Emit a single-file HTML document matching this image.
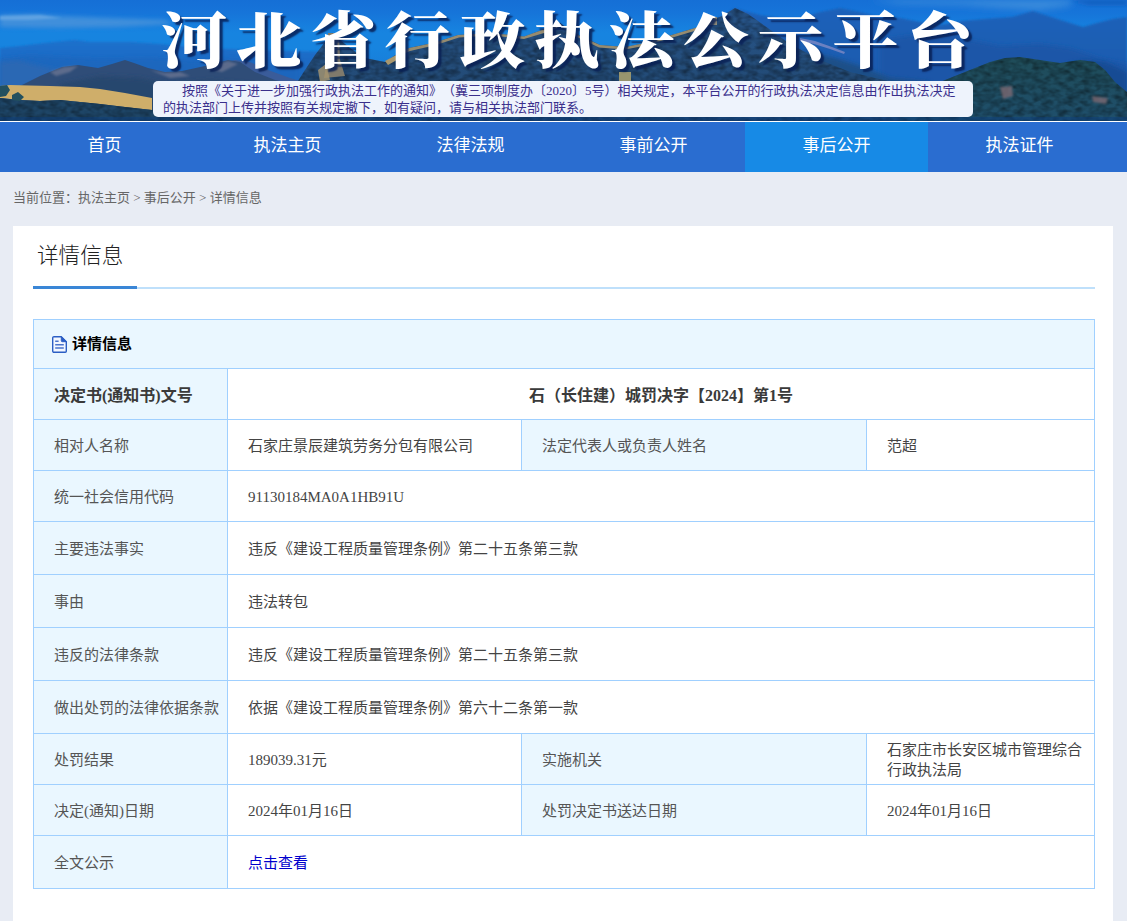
<!DOCTYPE html>
<html lang="zh-CN">
<head>
<meta charset="utf-8">
<title>河北省行政执法公示平台</title>
<style>
*{box-sizing:border-box;margin:0;padding:0;text-spacing-trim:space-all}
html,body{width:1127px;height:921px;overflow:hidden}
body{background:#e8ecf4;font-family:"Liberation Serif","Noto Sans CJK SC",sans-serif;font-size:15px;color:#555;position:relative}
a{text-decoration:none;color:inherit}
ul{list-style:none}
#banner{position:absolute;left:0;top:0;width:1127px;height:122px;background:#fff;overflow:hidden}
#banner svg{position:absolute;left:0;top:0;width:1127px;height:121px;display:block}
#title{position:absolute;left:161px;top:-8px;width:900px;height:90px;line-height:90px;font-family:"Noto Serif CJK SC","Noto Sans CJK SC",serif;font-weight:900;font-size:61px;color:#fff;white-space:nowrap;letter-spacing:8.2px;transform:scaleX(1.078);transform-origin:0 0;text-shadow:3px 3px 1.5px rgba(8,30,84,.85)}
#notice{position:absolute;left:153px;top:81px;width:820px;height:36px;background:#eef3fc;border-radius:5px;color:#3a2f8c;font-family:"Liberation Serif","Noto Sans CJK SC",sans-serif;font-size:13px;line-height:17px;padding:1px 10px 0 10px;text-indent:19px}
#nav{position:absolute;left:0;top:122px;width:1127px;height:50px;background:#2a6dd0}
#nav ul{position:absolute;left:13px;top:0;width:1100px;height:50px}
#nav li{float:left;width:183px;height:50px;line-height:47px;text-align:center;color:#fff;font-size:17px;font-family:"Liberation Sans","Noto Sans CJK SC",sans-serif}
#nav li.on{background:#178ae6}
#crumb{position:absolute;left:13px;top:188px;height:20px;line-height:20px;font-size:13px;color:#666;font-family:"Liberation Serif","Noto Sans CJK SC",sans-serif;white-space:nowrap}
#card{position:absolute;left:13px;top:226px;width:1100px;height:700px;background:#fff}
#card h2{position:absolute;left:24px;top:15px;font-weight:300;font-size:21.6px;line-height:30px;color:#222;font-family:"Liberation Sans","Noto Sans CJK SC",sans-serif}
#rule{position:absolute;left:20px;top:61px;width:1062px;height:2px;background:#bfe0fb}
#rule i{position:absolute;left:0;top:-1px;width:104px;height:3px;background:#3a86d6}
table{position:absolute;left:20px;top:93px;width:1061px;border-collapse:collapse;table-layout:fixed}
td,th{border:1px solid #a0d0ff;padding:1px 8px 0 20px;white-space:nowrap;text-align:left;vertical-align:middle;font-weight:normal;line-height:20px;height:51px}
th{background:#eaf7ff}
td{background:#fff;color:#444}
tr.cap th{height:49px;font-weight:bold;color:#000;font-size:15px;padding-left:18px;padding-top:0}
tr.h53 td,tr.h53 th{height:53px}
th.big{font-weight:bold;font-size:16px;color:#3a3a3a;padding-top:3px}
td.big{font-weight:bold;font-size:16px;color:#3a3a3a;text-align:center;padding:3px 20px 0 20px}
td a{color:#0000cc}
.ico{display:inline-block;vertical-align:-4px;margin-right:5px}
</style>
</head>
<body>
<div id="banner">
<svg viewBox="0 0 1127 121" preserveAspectRatio="none">
<defs>
<linearGradient id="sky" x1="0" y1="0" x2="0" y2="1">
<stop offset="0" stop-color="#156fd6"/><stop offset=".1" stop-color="#1674d9"/><stop offset=".27" stop-color="#1784e0"/><stop offset=".4" stop-color="#1784df"/><stop offset="1" stop-color="#1a6cc8"/>
</linearGradient>
<linearGradient id="far" x1="0" y1="0" x2="0" y2="1">
<stop offset="0" stop-color="#1a70cc"/><stop offset=".3" stop-color="#1c6ac4"/><stop offset="1" stop-color="#2666b4"/>
</linearGradient>
<linearGradient id="hill" x1="0" y1="0" x2="0" y2="1">
<stop offset="0" stop-color="#28568c"/><stop offset=".5" stop-color="#244d7a"/><stop offset="1" stop-color="#1f456e"/>
</linearGradient>
<linearGradient id="rfar" x1="0" y1="0" x2="0" y2="1">
<stop offset="0" stop-color="#1c62ba"/><stop offset=".5" stop-color="#1b5cb0"/><stop offset="1" stop-color="#1a56a6"/>
</linearGradient>
<linearGradient id="grn" x1="0" y1="0" x2="0" y2="1">
<stop offset="0" stop-color="#1f4c58"/><stop offset="1" stop-color="#1f4f6c"/>
</linearGradient>
<filter id="b1" x="-10%" y="-50%" width="120%" height="200%"><feGaussianBlur stdDeviation="1"/></filter>
<filter id="b2" x="-10%" y="-50%" width="120%" height="200%"><feGaussianBlur stdDeviation="2"/></filter>
<filter id="b3" x="-10%" y="-80%" width="120%" height="260%"><feGaussianBlur stdDeviation="3.5"/></filter>
<filter id="tex" x="0" y="0" width="100%" height="100%"><feTurbulence type="fractalNoise" baseFrequency=".12 .2" numOctaves="2" seed="7" result="n"/><feColorMatrix in="n" type="matrix" values="0 0 0 0 0  0 0 0 0 0  0 0 0 0 0  1.2 1.2 0 0 -.9"/><feComposite in2="SourceGraphic" operator="in"/></filter>
</defs>
<rect width="1127" height="121" fill="url(#sky)"/>
<!-- clouds -->
<path d="M0 15 L35 14 L60 16 L110 18 L165 20 L172 24 L120 27 L60 28 L0 27Z" fill="#3f8fdb" filter="url(#b2)"/>
<path d="M0 16 L40 15 L62 18 L30 20 L0 20Z" fill="#5ea2e2" filter="url(#b1)"/>
<path d="M870 0 L1075 0 L1068 6 L1040 10 L1000 8 L960 5 L900 4Z" fill="#3a8cdc" filter="url(#b3)"/>
<path d="M1070 0 L1127 0 L1127 5 L1090 5Z" fill="#155fbe" filter="url(#b2)"/>
<!-- far mountains left -->
<path d="M0 48 L20 46 L45 43 L65 41 L75 40 L90 42 L130 42 L160 44 L200 48 L250 50 L330 52 L330 121 L0 121Z" fill="url(#far)" filter="url(#b1)"/>
<path d="M0 59 L30 55 L60 57 L100 59 L150 58 L200 61 L260 58 L300 60 L300 121 L0 121Z" fill="#1e66bc" opacity=".7" filter="url(#b2)"/>
<path d="M0 62 L18 60 L40 66 L60 70 L20 88 L0 88Z" fill="#2a68b4" filter="url(#b2)"/>
<!-- mid mountains left -->
<path d="M235 60 L250 62 L268 70 L290 78 L310 84 L310 121 L200 121 L200 70Z" fill="#3a5c9a"/>
<path d="M18 87 L40 76 L62 67 L78 65 L98 68 L112 64 L125 60 L134 63 L148 68 L165 72 L182 71 L205 66 L228 60 L240 62 L255 72 L275 80 L300 86 L300 121 L18 121Z" fill="#2f4d78"/>
<path d="M60 84 L100 76 L140 78 L170 84 L210 80 L250 84 L290 90 L300 121 L60 121Z" fill="#28466e" filter="url(#b2)"/>
<path d="M50 72 L64 67 L78 66 L70 72 L56 76Z M150 70 L165 73 L180 72 L190 76 L170 78Z M205 68 L228 61 L238 64 L222 72Z" fill="#8a8aa0" opacity=".5" filter="url(#b1)"/>
<!-- right far mountains -->
<path d="M700 26 L722 16 L735 8 L745 11 L760 15 L780 18 L800 18 L820 12 L840 8 L860 12 L880 17 L900 18 L920 22 L940 25 L962 21 L985 19 L1012 17 L1033 11 L1051 17 L1070 23 L1083 27 L1097 23 L1113 19 L1127 17 L1127 121 L700 121Z" fill="url(#rfar)" filter="url(#b1)"/>
<path d="M880 40 L920 34 L960 38 L1000 46 L1040 44 L1070 48 L1100 58 L1127 64 L1127 121 L880 121Z" fill="#1a56a8" filter="url(#b2)"/>
<path d="M1060 66 L1085 60 L1105 62 L1127 72 L1127 100 L1090 84Z" fill="#174c94" filter="url(#b2)"/>
<path d="M780 50 L810 52 L835 58 L860 66 L890 78 L930 82 L930 121 L780 121Z" fill="#1c4f88" filter="url(#b2)"/>
<!-- central hills with great wall -->
<path d="M296 84 L305 70 L315 55 L325 42 L333 36 L340 40 L350 48 L365 58 L385 62 L400 52 L409 48 L435 42.5 L458 35 L492 33 L524 36.5 L542 30 L560 23 L577 34 L600 45 L625 47 L640 44 L670 35.5 L700 26.5 L712 20 L722 16 L735 8 L748 14 L765 26 L790 44 L820 60 L850 72 L900 84 L960 90 L960 121 L296 121Z" fill="url(#hill)"/>
<path d="M296 84 L305 70 L315 55 L325 42 L333 36 L340 40 L350 48 L365 58 L385 62 L400 52 L409 48 L435 42.5 L458 35 L492 33 L524 36.5 L542 30 L560 23 L577 34 L600 45 L625 47 L640 44 L670 35.5 L700 26.5 L712 20 L722 16 L735 8 L748 14 L765 26 L790 44 L820 60 L850 72 L900 84 L960 90 L960 121 L296 121Z" fill="#1a3f66" filter="url(#tex)" opacity=".45"/>
<path d="M400 52 L409 48 L435 42.5 L458 35 L492 33 L524 36.5 L542 30 L558 24 L562 26 L544 33 L524 39 L492 35.5 L459 37.5 L436 45 L410 51 L401 55Z" fill="#a39470" opacity=".9"/>
<path d="M578 35 L600 45 L625 47 L640 44 L670 35.5 L700 26.5 L711 20.5 L714 23 L701 29 L671 38 L641 46.5 L625 49.5 L599 47.5 L577 37Z" fill="#a39470" opacity=".9"/>
<path d="M706 17 L717 17 L717 25 L706 25Z" fill="#8f8a78"/>
<path d="M327 60 L328 33 L339 33 L340 60 L345 76 L324 78Z" fill="#7f7a6c"/>
<path d="M318 70 L326 64 L330 80 L320 82Z" fill="#a89670" opacity=".8"/>
<path d="M385 61 L400 53 L402 57 L388 65Z" fill="#a8976e"/>
<path d="M619 72 L631 72 L631 81 L619 81Z" fill="#98946e"/>
<path d="M800 38 L815 41 L832 47 L845 52 L844 54 L830 49 L814 44 L800 41Z" fill="#8d90c8" opacity=".7"/>
<!-- right green hill -->
<path d="M900 90 L940 82 L965 72 L990 62 L1005 58 L1020 57 L1040 60 L1060 63 L1080 60 L1095 62 L1105 70 L1115 82 L1127 92 L1127 121 L900 121Z" fill="url(#grn)"/>
<path d="M900 90 L940 82 L965 72 L990 62 L1005 58 L1020 57 L1040 60 L1060 63 L1080 60 L1095 62 L1105 70 L1115 82 L1127 92 L1127 121 L900 121Z" fill="#143a48" filter="url(#tex)" opacity=".45"/>
<path d="M1000 87 L1012 86 L1013 96 L1003 99Z M1092 96 L1108 98 L1106 104 L1093 102Z" fill="#8a6f78" opacity=".7" filter="url(#b1)"/>
<!-- sand band left -->
<path d="M0 86 L10 85 L50 86 L80 87 L100 89 L125 93 L152 98 L152 110 L125 107 L100 104 L80 102 L60 100 L40 101 L20 100 L0 98Z" fill="#cfae6a"/>
<path d="M0 98 L20 100 L40 101 L60 100 L80 102 L100 104 L125 107 L152 110 L300 112 L300 121 L0 121Z" fill="#1e4566"/>
<path d="M0 98 L20 100 L40 101 L60 100 L80 102 L100 104 L125 107 L152 110 L300 112 L300 121 L0 121Z" fill="#143550" filter="url(#tex)" opacity=".4"/>
<path d="M0 86 L7 85 L10 90 L6 96 L0 97Z M12 95 L18 92 L24 97 L20 101 L12 100Z" fill="#23505f"/>
<rect x="0" y="117" width="1127" height="4" fill="#0c3f80" opacity=".45"/>
</svg>
<h1 id="title">河北省行政执法公示平台</h1>
<p id="notice">按照《关于进一步加强行政执法工作的通知》（冀三项制度办〔2020〕5号）相关规定，本平台公开的行政执法决定信息由作出执法决定的执法部门上传并按照有关规定撤下，如有疑问，请与相关执法部门联系。</p>
</div>
<div id="nav"><ul>
<li><a>首页</a></li><li><a>执法主页</a></li><li><a>法律法规</a></li><li><a>事前公开</a></li><li class="on"><a>事后公开</a></li><li><a>执法证件</a></li>
</ul></div>
<div id="crumb">当前位置：执法主页 &gt; 事后公开 &gt; 详情信息</div>
<div id="card">
<h2>详情信息</h2>
<div id="rule"><i></i></div>
<table>
<colgroup><col style="width:194px"><col style="width:294px"><col style="width:345px"><col style="width:228px"></colgroup>
<tr class="cap"><th colspan="4"><svg class="ico" width="15" height="17" viewBox="0 0 15 17"><path d="M2 .7h7.3l5 5v9.6a1 1 0 0 1-1 1H2a1.3 1.3 0 0 1-1.3-1.3V2A1.3 1.3 0 0 1 2 .7z" fill="#f2f7ff" stroke="#2b5ec4" stroke-width="1.4" stroke-linejoin="round"/><path d="M9.3 .7v4a1 1 0 0 0 1 1h4z" fill="#2b5ec4" stroke="#2b5ec4" stroke-width="1" stroke-linejoin="round"/><path d="M3.2 5.3h3.4M3.2 8.7h8.6M3.2 12h8.6" stroke="#4a74cc" stroke-width="1.4" fill="none"/></svg>详情信息</th></tr>
<tr><th class="big">决定书(通知书)文号</th><td class="big" colspan="3">石（长住建）城罚决字【2024】第1号</td></tr>
<tr><th>相对人名称</th><td>石家庄景辰建筑劳务分包有限公司</td><th>法定代表人或负责人姓名</th><td>范超</td></tr>
<tr><th>统一社会信用代码</th><td colspan="3">91130184MA0A1HB91U</td></tr>
<tr class="h53"><th>主要违法事实</th><td colspan="3">违反《建设工程质量管理条例》第二十五条第三款</td></tr>
<tr class="h53"><th>事由</th><td colspan="3">违法转包</td></tr>
<tr class="h53"><th>违反的法律条款</th><td colspan="3">违反《建设工程质量管理条例》第二十五条第三款</td></tr>
<tr class="h53"><th>做出处罚的法律依据条款</th><td colspan="3">依据《建设工程质量管理条例》第六十二条第一款</td></tr>
<tr><th>处罚结果</th><td>189039.31元</td><th>实施机关</th><td style="white-space:normal">石家庄市长安区城市管理综合行政执法局</td></tr>
<tr><th>决定(通知)日期</th><td>2024年01月16日</td><th>处罚决定书送达日期</th><td>2024年01月16日</td></tr>
<tr class="h53"><th>全文公示</th><td colspan="3"><a>点击查看</a></td></tr>
</table>
</div>
</body>
</html>
